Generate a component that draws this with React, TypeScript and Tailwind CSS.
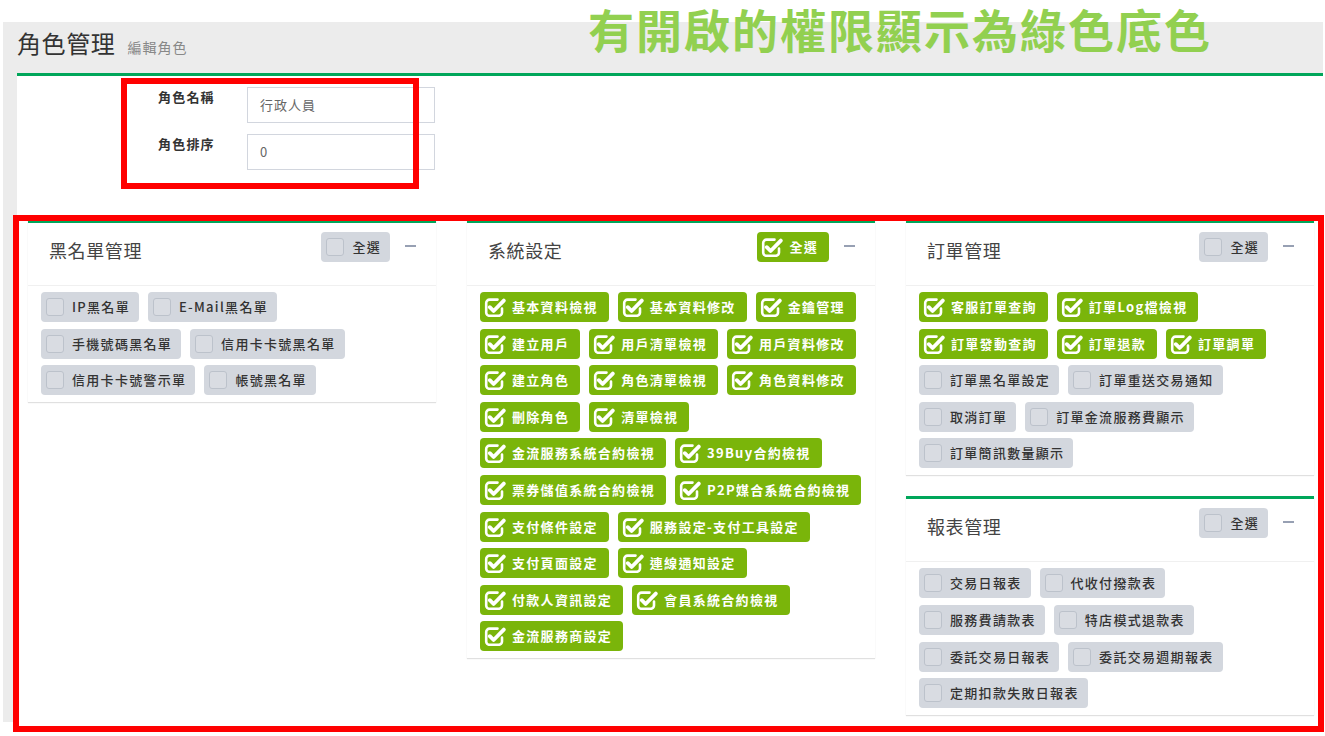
import React from 'react';

type Perm = { label: string; on?: boolean };

const off = (...labels: string[]): Perm[] => labels.map((label) => ({ label }));
const on = (...labels: string[]): Perm[] => labels.map((label) => ({ label, on: true }));

// each inner array is one row of buttons, as laid out in the screen
const blacklist: Perm[][] = [
  off('IP黑名單', 'E-Mail黑名單'),
  off('手機號碼黑名單', '信用卡卡號黑名單'),
  off('信用卡卡號警示單', '帳號黑名單'),
];

const system: Perm[][] = [
  on('基本資料檢視', '基本資料修改', '金鑰管理'),
  on('建立用戶', '用戶清單檢視', '用戶資料修改'),
  on('建立角色', '角色清單檢視', '角色資料修改'),
  on('刪除角色', '清單檢視'),
  on('金流服務系統合約檢視', '39Buy合約檢視'),
  on('票券儲值系統合約檢視', 'P2P媒合系統合約檢視'),
  on('支付條件設定', '服務設定-支付工具設定'),
  on('支付頁面設定', '連線通知設定'),
  on('付款人資訊設定', '會員系統合約檢視'),
  on('金流服務商設定'),
];

const orders: Perm[][] = [
  on('客服訂單查詢', '訂單Log檔檢視'),
  on('訂單發動查詢', '訂單退款', '訂單調單'),
  off('訂單黑名單設定', '訂單重送交易通知'),
  off('取消訂單', '訂單金流服務費顯示'),
  off('訂單簡訊數量顯示'),
];

const reports: Perm[][] = [
  off('交易日報表', '代收付撥款表'),
  off('服務費請款表', '特店模式退款表'),
  off('委託交易日報表', '委託交易週期報表'),
  off('定期扣款失敗日報表'),
];

function CheckedIcon() {
  return (
    <svg width="22" height="20" viewBox="0 0 22 20" fill="none" className="shrink-0">
      <path
        d="M13.5 2.6 H5.6 A3.4 3.4 0 0 0 2.2 6 V15.4 A3.4 3.4 0 0 0 5.6 18.8 H14.6 A3.4 3.4 0 0 0 18 15.4 V11.5"
        stroke="white"
        strokeWidth="2.6"
        strokeLinecap="round"
      />
      <path
        d="M5.8 10.2 L9.6 14 L19.8 3.6"
        stroke="white"
        strokeWidth="3.8"
        strokeLinecap="round"
        strokeLinejoin="round"
      />
    </svg>
  );
}

function EmptyBox() {
  return (
    <span className="block h-[18px] w-[18px] shrink-0 rounded-[3px] border-[1.5px] border-[#bcc2cb] bg-[#d9dce2]" />
  );
}

function PermButton({ label, on }: Perm) {
  if (on) {
    return (
      <div className="flex h-[30px] items-center rounded-[4px] bg-[#7ab50a] pl-[4px] pr-[11px] text-white">
        <CheckedIcon />
        <span className="ml-[6px] text-[13px] font-bold leading-[18px] tracking-[1.3px]">{label}</span>
      </div>
    );
  }
  return (
    <div className="flex h-[30px] items-center rounded-[4px] bg-[#d3d7de] pl-[5px] pr-[9px] text-[#333]">
      <EmptyBox />
      <span className="ml-[8px] text-[13px] font-medium leading-[18px] tracking-[1.3px]">{label}</span>
    </div>
  );
}

function PermBox({ title, allOn, rows, className = '' }: { title: string; allOn?: boolean; rows: Perm[][]; className?: string }) {
  return (
    <div className={`border-t-[3px] border-[#00a65a] bg-white shadow-[0_1px_1px_rgba(0,0,0,0.12)] ${className}`}>
      <div className="flex h-[63px] items-start border-b border-[#f0f0f0] pl-[21px] pr-[20px]">
        <h3 className="mt-[16px] flex-1 text-[18px] font-normal leading-[22px] tracking-[0.6px] text-[#444]">{title}</h3>
        <div className="mt-[9px]">
          <PermButton label="全選" on={allOn} />
        </div>
        <div className="ml-[15px] mt-[22px] h-[2px] w-[11px] bg-[#97a0b3]" />
      </div>
      <div className="flex flex-col gap-y-[6.6px] px-[13px] pb-[7px] pt-[6px]">
        {rows.map((row, i) => (
          <div key={i} className="flex gap-x-[9px]">
            {row.map((p) => (
              <PermButton key={p.label} {...p} />
            ))}
          </div>
        ))}
      </div>
    </div>
  );
}

function Field({ label, value }: { label: string; value: string }) {
  return (
    <div className="flex items-start">
      <label className="w-[89px] pt-[1px] text-[13px] font-bold leading-[18px] tracking-[1.2px] text-[#333]">{label}</label>
      <div className="flex h-[36px] w-[188px] items-center border border-[#d2d6de] bg-white pl-[12px] text-[13px] tracking-[1px] text-[#666]">
        {value}
      </div>
    </div>
  );
}

export default function App() {
  return (
    <div
      className="relative h-[736px] w-[1325px] overflow-hidden bg-white pl-[3px] pt-[22px]"
      style={{ fontFamily: '"Noto Sans CJK TC", "Noto Sans", sans-serif' }}
    >
      <div className="flex h-[700px] w-[1320px] flex-col bg-[#ececec] pl-[14px]">
        <div className="flex h-[51px] items-baseline pt-[6px]">
          <h1 className="text-[24px] font-normal leading-[30px] tracking-[0.6px] text-[#333]">角色管理</h1>
          <span className="ml-[12px] text-[14px] leading-[30px] tracking-[1px] text-[#888]">編輯角色</span>
        </div>
        <div className="flex-1 border-t-[3px] border-[#00a65a] bg-white">
          <div className="flex flex-col gap-[11px] pl-[141px] pt-[11px]">
            <Field label="角色名稱" value="行政人員" />
            <Field label="角色排序" value="0" />
          </div>
          <div className="mt-[50px] grid grid-cols-[408px_408px_408px] items-start gap-x-[31px] pl-[11px]">
            <PermBox title="黑名單管理" rows={blacklist} />
            <PermBox title="系統設定" allOn rows={system} />
            <div className="flex flex-col">
              <PermBox title="訂單管理" rows={orders} />
              <PermBox title="報表管理" rows={reports} className="mt-[21px]" />
            </div>
          </div>
        </div>
      </div>

      {/* annotation overlays */}
      <div className="absolute left-[588px] top-[2px] whitespace-nowrap text-[46px] font-bold leading-[1.15] tracking-[2px] text-[#92d050]">
        有開啟的權限顯示為綠色底色
      </div>
      <div className="pointer-events-none absolute left-[121px] top-[78px] h-[111px] w-[298px] border-[6px] border-[#ff0000]" />
      <div className="pointer-events-none absolute left-[13px] top-[215px] h-[517px] w-[1311px] border-[6px] border-[#ff0000]" />
    </div>
  );
}
